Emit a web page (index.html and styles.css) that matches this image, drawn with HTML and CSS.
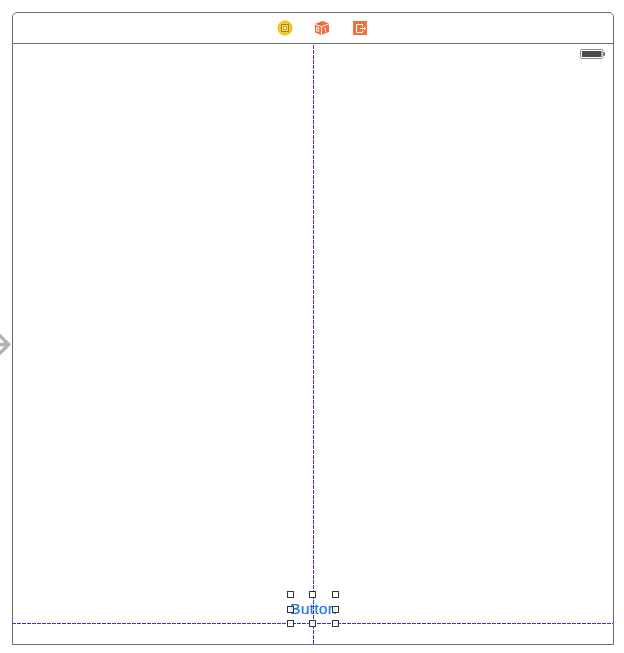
FILE: index.html
```
<!DOCTYPE html>
<html lang="en">
<head>
<meta charset="utf-8">
<title>View Controller</title>
<link rel="stylesheet" href="styles.css">
</head>
<body>
<svg class="entry" width="12" height="26" viewBox="0 0 12 26"><path d="M-2 12.5H8M-2 2L8.7 12.5L-2 23" fill="none" stroke="#b3b3b3" stroke-width="3.4"/></svg>
<main class="scene">
  <header class="dock">
    <svg width="16" height="16" viewBox="0 0 16 16"><circle cx="8" cy="8" r="7.4" fill="#f9cb2e"/><circle cx="8" cy="8" r="6.8" fill="none" stroke="#f0b90c"/><path d="M4.5 4.5h7v7h-7z" fill="#fbe37c" stroke="#a98508"/><path d="M6.3 6.3h3.4v3.4h-3.4z" fill="#fff6cf" stroke="#a98508" stroke-width=".8"/></svg>
    <svg width="16" height="16" viewBox="0 0 16 16"><path d="M.8 4L8.2 1L15 3.5V12L7.5 15L1 12.5z" fill="#f26c3d"/><path d="M1 4.5L7.5 6.5L15 4M7.5 6.5V15" fill="none" stroke="#fff" stroke-width=".9"/><path d="M2.7 7.3l2 .5v3.8l-2-.6zM10.2 8.7l1.2-.8v4.4" fill="none" stroke="#fff" stroke-width=".9"/></svg>
    <svg width="16" height="16" viewBox="0 0 16 16"><path d="M1 1h14v14H1z" fill="#f46f3d"/><path d="M10.5 6.5V4.5h-6v8h6V10.5M8 8.5h5.5M11.9 6.9l1.6 1.6l-1.6 1.6" fill="none" stroke="#fff" stroke-width="1"/></svg>
  </header>
  <section class="view">
    <svg class="battery" width="26" height="10" viewBox="0 0 26 10"><rect x=".5" y=".5" width="22.5" height="9" rx="1.7" fill="#fff" stroke="#888"/><rect x="2" y="2" width="19.5" height="6" fill="#4a4a4a"/><path d="M23.5 3h.5q1 0 1 2t-1 2h-.5z" fill="#555"/></svg>
    <div class="selection">
      <span class="label">Button</span>
    </div>
    <i class="guide-v"></i>
    <i class="guide-h"></i>
    <div class="handles">
      <i></i><i></i><i></i>
      <i></i><b></b><i></i>
      <i></i><i></i><i></i>
    </div>
  </section>
</main>
</body>
</html>
```
FILE: styles.css
```
* { box-sizing: border-box; }
body {
  margin: 0;
  height: 653px;
  padding: 12px 10px 8px 12px;
  background: #fff;
  overflow: hidden;
  font-family: "Liberation Sans", Arial, sans-serif;
}
svg { display: block; flex: none; }
.entry { position: absolute; left: 0; top: 332px; }
.scene {
  display: flex;
  flex-direction: column;
  width: 602px;
  height: 633px;
  border: 1px solid #6b6b6b;
  border-radius: 5px 5px 0 0;
}
.dock {
  display: grid;
  grid-template-columns: 37px 38px 16px;
  flex: none;
  align-items: center;
  height: 31px;
  padding-left: 264px;
  border-bottom: 1px solid #6b6b6b;
}
.view {
  position: relative;
  display: flex;
  flex: 1;
  flex-direction: column;
  justify-content: space-between;
  padding: 5px 7px 20px 0;
}
.battery { align-self: flex-end; }
.selection {
  width: 46px;
  height: 30px;
  margin-left: 277px;
  line-height: 30px;
}
.label {
  color: #1673e6;
  font-size: 15.5px;
  letter-spacing: .3px;
  -webkit-text-stroke: .15px #1673e6;
  white-space: nowrap;
}
.guide-v {
  position: absolute;
  left: 300px;
  top: 1px;
  bottom: 0;
  width: 1px;
  background: repeating-linear-gradient(#3434dc 0 4px, transparent 4px 5px);
}
.guide-h {
  position: absolute;
  left: 0;
  right: 0;
  top: 579px;
  height: 1px;
  background: repeating-linear-gradient(90deg, #3434dc 0 3px, transparent 3px 4px, #3434dc 4px 5px);
}
.handles {
  position: absolute;
  left: 274px;
  top: 547px;
  display: grid;
  grid-template-columns: 22px 23px 7px;
  grid-template-rows: 15px 14px 7px;
}
.handles i {
  width: 7px;
  height: 7px;
  border: 1px solid #333;
  background: rgba(255, 255, 255, .85);
}
```
